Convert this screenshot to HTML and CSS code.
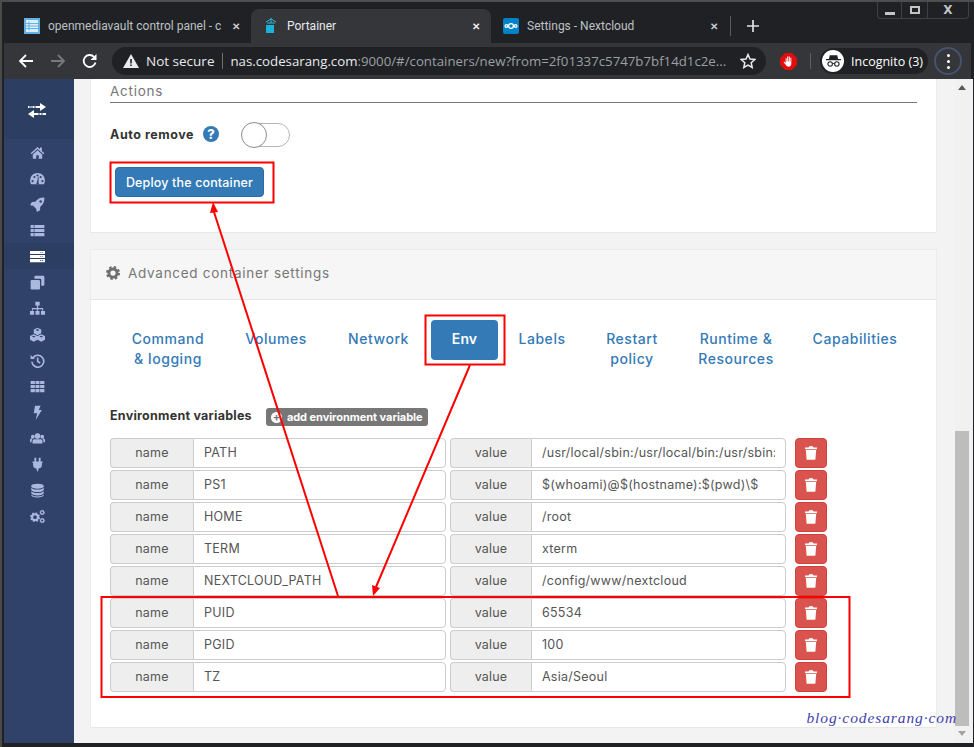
FILE: index.html
```html
<!DOCTYPE html>
<html lang="en">
<head>
<meta charset="utf-8">
<title>Portainer</title>
<link rel="stylesheet" href="styles.css">
</head>
<body>
<svg class="sprite" xmlns="http://www.w3.org/2000/svg">
  <symbol id="i-trash" viewBox="0 0 14 16"><path d="M5 0h4l1 1.500h4V3.500H0V1.500h4zM1 4.500h12l-.8 10.500a1 1 0 0 1-1 1H2.800a1 1 0 0 1-1-1z"/></symbol>
  <symbol id="i-gear" viewBox="0 0 24 24"><circle cx="12" cy="12" r="7" fill="none" stroke="currentColor" stroke-width="5"/><circle cx="12" cy="12" r="10" fill="none" stroke="currentColor" stroke-width="4" stroke-dasharray="4.200 3.650"/></symbol>
</svg>
<div class="window">
  <div class="tabstrip">
    <div class="tab">
      <svg class="favicon" viewBox="0 0 16 16"><rect width="16" height="16" fill="#63b1e5"/><rect x="2" y="2" width="12" height="12" fill="#dbeefa"/><path d="M5 3.500v9M2 5.500h12M2 8h12M2 10.500h12" stroke="#63b1e5"/></svg>
      <span class="tab-title">openmediavault control panel - c</span>
      <span class="tab-close">✕</span>
    </div>
    <div class="tab tab-active">
      <svg class="favicon" viewBox="0 0 16 16"><path d="M8 0v5M3 4l5-3 5 3M4 5h8" stroke="#2bb8d8" fill="none"/><rect x="3" y="7" width="8" height="8" fill="#19b5d8"/></svg>
      <span class="tab-title">Portainer</span>
      <span class="tab-close">✕</span>
    </div>
    <div class="tab tab-last">
      <svg class="favicon" viewBox="0 0 16 16"><rect width="16" height="16" rx="2" fill="#0082c9"/><g fill="none" stroke="#fff" stroke-width="1.300"><circle cx="8" cy="8" r="2.400"/><circle cx="3.400" cy="8" r="1.300"/><circle cx="12.600" cy="8" r="1.300"/></g></svg>
      <span class="tab-title">Settings - Nextcloud</span>
      <span class="tab-close">✕</span>
    </div>
    <span class="tab-sep"></span>
    <svg class="newtab" viewBox="0 0 12 12"><path d="M6 0v12M0 6h12" stroke="#dee1e6" stroke-width="1.700"/></svg>
    <div class="winctl">
      <span class="winbtn winbtn-min"><i></i></span>
      <span class="winbtn winbtn-max"><i></i></span>
      <span class="winbtn winbtn-close">X</span>
    </div>
  </div>
  <div class="toolbar">
    <svg class="navicon" viewBox="0 0 16 16"><path d="M15 8H2M8 2 2 8l6 6" fill="none" stroke="#fff" stroke-width="1.800"/></svg>
    <svg class="navicon navicon-off" viewBox="0 0 16 16"><path d="M1 8h13M8 2l6 6-6 6" fill="none" stroke="#77797c" stroke-width="1.800"/></svg>
    <svg class="navicon" viewBox="0 0 16 16"><path d="M13.500 9.500A6 6 0 1 1 12 3.800" fill="none" stroke="#fff" stroke-width="1.800"/><path d="M14.500 1v6h-6z" fill="#fff"/></svg>
    <div class="omnibox">
      <svg class="warn" viewBox="0 0 16 14"><path d="M8 0l8 14H0z" fill="#e8eaed"/><path d="M7.200 5h1.600v4.500H7.200zM7.200 10.500h1.600V12H7.200z" fill="#202124"/></svg>
      <span class="secure">Not secure</span>
      <span class="omni-sep"></span>
      <span class="url"><b>nas.codesarang.com</b>:9000/#/containers/new?from=2f01337c5747b7bf14d1c2e...</span>
      <svg class="star" viewBox="0 0 16 16"><path d="M8 1.500l2 4.500 4.800.5-3.600 3.200 1 4.800L8 12.100l-4.200 2.400 1-4.800L1.200 6.500 6 6z" fill="none" stroke="#e8eaed" stroke-width="1.500"/></svg>
    </div>
    <svg class="adblock" viewBox="0 0 18 18"><path d="M5.500 0h7L18 5.500v7L12.500 18h-7L0 12.500v-7z" fill="#e40d0d"/><path d="M6 5.500h1V9h.6V3.800h1.100V9h.6V3.800h1.100V9h.6V5h1V11c0 2-1 3.500-3 3.500-1.500 0-2.200-.8-3-2L3.700 9.500l.8-.6L6 10.500z" fill="#fff"/></svg>
    <span class="tool-sep"></span>
    <div class="incognito">
      <span class="incog-avatar"><svg viewBox="0 0 18 14"><path d="M4.500 0h9l1 4.500H18V6H0V4.500h3.500z" fill="#202124"/><g fill="none" stroke="#202124" stroke-width="1.300"><circle cx="5" cy="10.500" r="2.700"/><circle cx="13" cy="10.500" r="2.700"/></g><path d="M7.700 10h2.600" stroke="#202124"/></svg></span>
      <span class="incog-label">Incognito (3)</span>
    </div>
    <span class="menu-btn"><i></i><i></i><i></i></span>
  </div>
  <div class="viewport">
    <nav class="sidebar">
      <div class="brand">
        <svg viewBox="0 0 18 15"><path d="M0 3h12V0l6 4-6 4V5H0z" fill="#fff"/><path d="M18 10H6V7L0 11l6 4v-3h12z" fill="#fff"/><path d="M2 3v2M4 3v2M7 3v2M11 10v2M14 10v2" stroke="#30426a"/></svg>
      </div>
      <a class="side-item"><svg viewBox="0 0 24 24"><path d="M12 3 1 13l1.500 1.800L12 6.500l9.500 8.300L23 13l-4-3.600V4h-3v2.800zM4.500 15v7H10v-5.500h4V22h5.500v-7L12 8.500z"/></svg></a>
      <a class="side-item"><svg viewBox="0 0 24 24"><path fill-rule="evenodd" d="M12 3A12 12 0 0 0 0 15c0 2.500.7 4.500 2 6h20c1.300-1.500 2-3.500 2-6A12 12 0 0 0 12 3zM4 14.500a1.700 1.700 0 1 1 0 3.400 1.700 1.700 0 0 1 0-3.400zM7 8a1.700 1.700 0 1 1 0 3.400A1.700 1.700 0 0 1 7 8zm5-2.500a1.700 1.700 0 1 1 0 3.400 1.700 1.700 0 0 1 0-3.400zM17 8a1.700 1.700 0 1 1 0 3.400A1.700 1.700 0 0 1 17 8zm3 6.500a1.700 1.700 0 1 1 0 3.400 1.700 1.700 0 0 1 0-3.400zM11 18l2-8.500 1 .2-.5 8.300a2 2 0 1 1-2.500 0z"/></svg></a>
      <a class="side-item"><svg viewBox="0 0 24 24"><path fill-rule="evenodd" d="M23 1c.5 6-2 11-6.500 14.500L16 21l-5 3-1-5-5-5-5-1 3-5 5.500-.5C12 3 17 .5 23 1zM17 5a2 2 0 1 0 0 4 2 2 0 0 0 0-4z"/></svg></a>
      <a class="side-item"><svg viewBox="0 0 24 24"><path d="M1 3h5v5H1zM7 3h16v5H7zM1 9.500h5v5H1zM7 9.500h16v5H7zM1 16h5v5H1zM7 16h16v5H7z"/></svg></a>
      <a class="side-item side-active"><svg viewBox="0 0 24 24"><path fill-rule="evenodd" d="M0 3h24v5H0zM16 5v1h2V5zm3 0v1h2V5zM0 9.500h24v5H0zM16 11.500v1h2v-1zm3 0v1h2v-1zM0 16h24v5H0zM16 18v1h2v-1zm3 0v1h2v-1z"/></svg></a>
      <a class="side-item"><svg viewBox="0 0 24 24"><path d="M9 1h12a2 2 0 0 1 2 2v12a2 2 0 0 1-2 2h-3V8a2 2 0 0 0-2-2H7V3a2 2 0 0 1 2-2z"/><path d="M3 8h11a2 2 0 0 1 2 2v11a2 2 0 0 1-2 2H3a2 2 0 0 1-2-2V10a2 2 0 0 1 2-2z"/></svg></a>
      <a class="side-item"><svg viewBox="0 0 24 24"><path d="M8.500 1h7v6h-2.500v4h8v4.500h-1.500V13H13v2.500h-2V13H4.500v2.500H3V11h8V7H8.500zM0 16h6.500v6H0zM8.750 16h6.500v6h-6.500zM17.500 16H24v6h-6.500z"/></svg></a>
      <a class="side-item"><svg viewBox="0 0 24 24"><path fill-rule="evenodd" d="M12 1l6 3v6l-6 3-6-3V4zM12 3.300 9 4.800l3 1.500 3-1.500zM6 11.500l6 3v6l-6 3-6-3v-6zM6 13.800l-3 1.500 3 1.500 3-1.500zM18 11.500l6 3v6l-6 3-6-3v-6zM18 13.800l-3 1.500 3 1.500 3-1.500z"/></svg></a>
      <a class="side-item"><svg viewBox="0 0 24 24"><path d="M4.500 8A9.500 9.500 0 1 1 3 14" fill="none" stroke="currentColor" stroke-width="2.600"/><path d="M1 3l7 6.500H1zM11 7h2.500v5.500l3.500 2.500-1.500 2L11 14z"/></svg></a>
      <a class="side-item"><svg viewBox="0 0 24 24"><path d="M1 3h6.800v5H1zM8.800 3h6.400v5H8.800zM16.200 3H23v5h-6.800zM1 9.500h6.800v5H1zM8.800 9.500h6.400v5H8.800zM16.200 9.500H23v5h-6.800zM1 16h6.800v5H1zM8.800 16h6.400v5H8.800zM16.200 16H23v5h-6.800z"/></svg></a>
      <a class="side-item"><svg viewBox="0 0 24 24"><path d="M8 1h9l-3 7h5L9 24l2.500-11H6z"/></svg></a>
      <a class="side-item"><svg viewBox="0 0 24 24"><circle cx="12" cy="8" r="4.500"/><circle cx="4.500" cy="9" r="3"/><circle cx="19.500" cy="9" r="3"/><path d="M6.500 13h11c1.500 0 2.500 1.500 2.500 4v3H4v-3c0-2.500 1-4 2.500-4zM0 18v-3c0-2 1-3.500 3-3.500h2c-1.500 1-2.500 3-2.500 6.500zM24 18v-3c0-2-1-3.500-3-3.500h-2c1.500 1 2.500 3 2.500 6.500z"/></svg></a>
      <a class="side-item"><svg viewBox="0 0 24 24"><path d="M7 1h3v6h4V1h3v6h3v2.500h-1V13c0 3-2 5-5.500 5.500V20L12 24l-1.500-4v-1.500C7 18 5 16 5 13V9.500H4V7h3z"/></svg></a>
      <a class="side-item"><svg viewBox="0 0 24 24"><ellipse cx="12" cy="5" rx="10" ry="4"/><path d="M2 7.500c2 2 5.500 3 10 3s8-1 10-3V11c-2 2.500-5.500 3.500-10 3.500S4 13.500 2 11zM2 13c2 2 5.500 3 10 3s8-1 10-3v3.500c-2 2.500-5.500 3.500-10 3.500S4 19 2 16.500z"/><path d="M2 18.500c2 2 5.500 3 10 3s8-1 10-3V19c0 2.500-4.500 4-10 4S2 21.500 2 19z"/></svg></a>
      <a class="side-item"><svg viewBox="0 0 24 24"><use href="#i-gear" x="0" y="5" width="16" height="16"/><use href="#i-gear" x="15" y="1" width="9" height="9"/><use href="#i-gear" x="15" y="14" width="9" height="9"/></svg></a>
    </nav>
    <main class="main">
      <section class="card card-actions">
        <h2 class="section-title">Actions</h2>
        <div class="autoremove">
          <span class="field-label">Auto remove</span>
          <span class="help">?</span>
          <span class="toggle"><i></i></span>
        </div>
        <button class="btn-deploy" type="button">Deploy the container</button>
      </section>
      <section class="card card-advanced">
        <header class="card-head">
          <svg class="head-icon"><use href="#i-gear"/></svg>
          <span>Advanced container settings</span>
        </header>
        <div class="card-body">
          <ul class="pills">
            <li>Command<br>&amp; logging</li>
            <li>Volumes</li>
            <li>Network</li>
            <li class="pill-on">Env</li>
            <li>Labels</li>
            <li>Restart<br>policy</li>
            <li>Runtime &amp;<br>Resources</li>
            <li>Capabilities</li>
          </ul>
          <div class="env-head">
            <span class="field-label">Environment variables</span>
            <span class="badge"><span class="badge-plus">+</span>add environment variable</span>
          </div>
          <div class="env-row">
            <div class="pair"><span class="addon addon-name">name</span><input class="field" readonly value="PATH"></div>
            <div class="pair"><span class="addon addon-value">value</span><input class="field" readonly value="/usr/local/sbin:/usr/local/bin:/usr/sbin:/usr/bin:/sbin:/bin"></div>
            <button class="btn-del" type="button"><svg><use href="#i-trash"/></svg></button>
          </div>
          <div class="env-row">
            <div class="pair"><span class="addon addon-name">name</span><input class="field" readonly value="PS1"></div>
            <div class="pair"><span class="addon addon-value">value</span><input class="field" readonly value="$(whoami)@$(hostname):$(pwd)\$"></div>
            <button class="btn-del" type="button"><svg><use href="#i-trash"/></svg></button>
          </div>
          <div class="env-row">
            <div class="pair"><span class="addon addon-name">name</span><input class="field" readonly value="HOME"></div>
            <div class="pair"><span class="addon addon-value">value</span><input class="field" readonly value="/root"></div>
            <button class="btn-del" type="button"><svg><use href="#i-trash"/></svg></button>
          </div>
          <div class="env-row">
            <div class="pair"><span class="addon addon-name">name</span><input class="field" readonly value="TERM"></div>
            <div class="pair"><span class="addon addon-value">value</span><input class="field" readonly value="xterm"></div>
            <button class="btn-del" type="button"><svg><use href="#i-trash"/></svg></button>
          </div>
          <div class="env-row">
            <div class="pair"><span class="addon addon-name">name</span><input class="field" readonly value="NEXTCLOUD_PATH"></div>
            <div class="pair"><span class="addon addon-value">value</span><input class="field" readonly value="/config/www/nextcloud"></div>
            <button class="btn-del" type="button"><svg><use href="#i-trash"/></svg></button>
          </div>
          <div class="env-row">
            <div class="pair"><span class="addon addon-name">name</span><input class="field" readonly value="PUID"></div>
            <div class="pair"><span class="addon addon-value">value</span><input class="field" readonly value="65534"></div>
            <button class="btn-del" type="button"><svg><use href="#i-trash"/></svg></button>
          </div>
          <div class="env-row">
            <div class="pair"><span class="addon addon-name">name</span><input class="field" readonly value="PGID"></div>
            <div class="pair"><span class="addon addon-value">value</span><input class="field" readonly value="100"></div>
            <button class="btn-del" type="button"><svg><use href="#i-trash"/></svg></button>
          </div>
          <div class="env-row">
            <div class="pair"><span class="addon addon-name">name</span><input class="field" readonly value="TZ"></div>
            <div class="pair"><span class="addon addon-value">value</span><input class="field" readonly value="Asia/Seoul"></div>
            <button class="btn-del" type="button"><svg><use href="#i-trash"/></svg></button>
          </div>
        </div>
      </section>
    </main>
    <div class="scrollbar">
      <span class="scroll-up"></span>
      <span class="scroll-thumb"></span>
      <span class="scroll-down"></span>
    </div>
  </div>
  <svg class="annotations" viewBox="0 0 974 747">
    <g fill="none" stroke="#f00" stroke-width="2">
      <rect x="110.500" y="162.500" width="163" height="40"/>
      <rect x="425.500" y="315.500" width="79" height="49"/>
      <rect x="101.500" y="597" width="748" height="100"/>
      <path d="M338 596 214 212M470 365 376 587"/>
    </g>
    <path d="M213 202l5 10-8 1zM373 596l-1-11 8 3z" fill="#f00"/>
  </svg>
  <span class="watermark">blog·codesarang·com</span>
</div>
</body>
</html>
```
FILE: styles.css
```css
* { box-sizing: border-box; }
html, body { margin: 0; padding: 0; }
body { width: 974px; height: 747px; overflow: hidden; background: #202124; }
.sprite { display: none; }
.window {
  position: relative; width: 974px; height: 747px;
  display: flex; flex-direction: column;
  background: #202124;
  border-top: 2px solid #4d4d4d;
  border-left: 2px solid #4a4a4a;
  padding-left: 2px;
  padding-bottom: 4px;
  font-family: Inter, "Liberation Sans", sans-serif;
}

/* tab strip */
.tabstrip { height: 41px; flex: none; display: flex; align-items: flex-start; padding-left: 8px; font-family: Roboto, sans-serif; }
.tab { width: 239px; height: 34px; margin-top: 7px; display: flex; align-items: center; padding: 0 8px 0 12px; border-radius: 8px 8px 0 0; color: #bdc1c6; font-size: 12px; }
.tab-active { background: #35363a; color: #e8eaed; width: 240px; }
.tab-last { width: 238px; }
.favicon { width: 16px; height: 16px; flex: none; margin-right: 8px; }
.tab-title { flex: 1; min-width: 0; white-space: nowrap; }
.tab-close { font-size: 10px; width: 14px; font-weight: 700; color: #c8cbcf; text-align: center; }
.tab-active .tab-close { color: #e8eaed; }
.tab-sep { width: 1px; height: 20px; background: #5a5b5e; margin: 14px 0 0 1px; }
.newtab { width: 12px; height: 12px; margin: 18px 0 0 16px; flex: none; }
.winctl { margin-left: auto; margin-right: 5px; width: 92px; height: 17px; display: flex; border: 1px solid #3f4044; border-top: 0; border-radius: 0 0 4px 4px; color: #c4c4c4; }
.winbtn { display: flex; align-items: center; justify-content: center; border-right: 1px solid #3f4044; width: 24px; }
.winbtn-max { width: 26px; }
.winbtn-close { flex: 1; border-right: 0; width: auto; font: 700 12px "DejaVu Sans", sans-serif; }
.winbtn-min i { width: 10px; height: 3px; background: #c4c4c4; margin-top: 6px; }
.winbtn-max i { width: 10px; height: 8px; border: 2px solid #c4c4c4; }

/* toolbar */
.toolbar { height: 36px; flex: none; margin-right: 3px; display: flex; align-items: center; background: #35363a; padding-left: 14px; font-family: "Open Sans", sans-serif; }
.navicon { width: 16px; height: 16px; flex: none; margin-right: 16px; }
.omnibox { width: 654px; height: 28px; margin-left: -2px; border-radius: 14px; background: #202124; display: flex; align-items: center; padding-left: 11px; color: #e8eaed; font-size: 13.500px; }
.warn { width: 16px; height: 14px; flex: none; margin-right: 7px; }
.secure { white-space: nowrap; }
.omni-sep { width: 1px; height: 16px; background: #6b6d70; margin: 0 7px 0 8px; }
.url { color: #9aa0a6; white-space: nowrap; flex: 1; font-size: 13.250px; }
.url b { font-weight: 400; color: #e8eaed; }
.star { width: 16px; height: 16px; flex: none; margin: 0 10px 0 6px; }
.adblock { width: 17px; height: 17px; flex: none; margin-left: 14px; }
.tool-sep { width: 1px; height: 16px; background: #5f6063; margin: 0 9px 0 13px; }
.incognito { width: 108px; height: 26px; border-radius: 13px; background: #202124; display: flex; align-items: center; color: #fff; font-size: 12.500px; padding-left: 2px; }
.incog-avatar { width: 22px; height: 22px; border-radius: 50%; background: #fff; display: flex; align-items: center; justify-content: center; margin-right: 7px; }
.incog-avatar svg { width: 15px; height: 12px; }
.incog-label { white-space: nowrap; }
.menu-btn { width: 28px; height: 28px; margin-left: 6px; border-radius: 50%; border: 2px solid #46526e; display: flex; flex-direction: column; align-items: center; justify-content: center; gap: 3px; }
.menu-btn i { width: 3px; height: 3px; background: #fff; border-radius: 50%; }

/* viewport */
.viewport { flex: 1; display: flex; min-height: 0; margin-right: 1px; }
.sidebar { width: 70px; flex: none; background: #30426a; display: flex; flex-direction: column; padding-right: 4px; }
.brand { height: 60px; margin-right: -4px; padding: 2px 4px 0 0; background: #2d3e63; display: flex; align-items: center; justify-content: center; }
.brand svg { width: 18px; height: 15px; }
.side-item { height: 26px; display: flex; align-items: center; justify-content: center; color: #a9b8dd; }
.side-item svg { width: 15px; height: 15px; fill: currentColor; }
.side-active { background: #2d3e63; color: #fff; margin-right: -4px; padding-right: 4px; }
.main { width: 881px; flex: none; background: #f3f3f3; padding: 0 18px 0 16px; overflow: hidden; }
.card { background: #fff; border-bottom: 1px solid #e8e8e8; border-left: 1px solid #ececec; border-right: 1px solid #ececec; }
.card-actions { height: 154px; padding: 0 19px; }
.section-title { margin: 0; height: 24px; padding-top: 4px; font-size: 13.500px; line-height: 16px; font-weight: 400; color: #767676; border-bottom: 1px solid #777; letter-spacing: .75px; }
.autoremove { display: flex; align-items: center; height: 24px; margin-top: 20px; }
.autoremove .field-label { letter-spacing: .55px; position: relative; top: -1px; }
.field-label { font-size: 12.500px; font-weight: 700; color: #333; letter-spacing: .25px; white-space: nowrap; }
.help { width: 16px; height: 16px; margin: -2px 0 0 9px; border-radius: 50%; background: #337ab7; color: #fff; font-size: 13px; font-weight: 800; line-height: 16px; text-align: center; }
.toggle { position: relative; width: 48px; height: 24px; margin-left: 23px; border: 1px solid #b5b5b5; border-radius: 12px; background: #fff; }
.toggle i { position: absolute; left: -2px; top: -2px; width: 26px; height: 26px; border-radius: 50%; background: #fff; border: 1px solid #8c8c8c; }
.btn-deploy { display: block; width: 149px; height: 30px; margin: 20px 0 0 5px; border: 1px solid #2e6da4; border-radius: 4px; background: #337ab7; color: #fff; font: 500 12.500px Inter, sans-serif; letter-spacing: .15px; padding: 0; }
.card-advanced { height: 479px; margin-top: 16px; }
.card-head { height: 51px; display: flex; align-items: center; gap: 8px; padding: 0 0 3px 15px; background: #f6f6f6; border-top: 1px solid #ececec; border-bottom: 1px solid #e6e6e6; color: #767676; font-size: 13.500px; letter-spacing: .72px; }
.head-icon { width: 14px; height: 14px; fill: none; color: #6f6f6f; }
.card-body { padding: 20px 19px 0; }
.pills { list-style: none; margin: 0; padding: 0; display: grid; grid-template-columns: 116px 100px 105px 67px 88px 92px 116px 122px; gap: 0; align-items: start; color: #337ab7; font-size: 14px; line-height: 20px; text-align: center; height: 60px; letter-spacing: .55px; font-weight: 500; }
.pills li { padding: 9px 0 0; white-space: nowrap; }
.pills .pill-on { height: 40px; padding-top: 9px; background: #337ab7; color: #fff; border-radius: 4px; font-weight: 600; letter-spacing: .1px; }
.env-head { display: flex; align-items: center; height: 18px; margin-top: 28px; margin-bottom: 12px; }
.env-head .field-label { position: relative; top: -2px; }
.badge { margin-left: 14px; height: 18px; width: 162px; border-radius: 3px; background: #777; color: #fff; font-size: 11px; font-weight: 700; display: flex; align-items: center; padding-left: 5px; white-space: nowrap; letter-spacing: -.05px; }
.badge-plus { width: 11px; height: 11px; margin-right: 5px; border-radius: 50%; background: #fff; color: #777; font-size: 11px; line-height: 10px; text-align: center; flex: none; }
.env-row { display: flex; height: 30px; margin-bottom: 2px; }
.pair { width: 336px; display: flex; height: 30px; margin-right: 4px; }
.addon { flex: none; height: 30px; background: #eee; border: 1px solid #ccc; border-right: 0; border-radius: 4px 0 0 4px; color: #555; font-size: 12.500px; line-height: 27px; text-align: center; letter-spacing: .2px; }
.addon-name { width: 83px; }
.addon-value { width: 81px; }
.field { flex: 1; min-width: 0; height: 30px; border: 1px solid #ccc; border-radius: 0 4px 4px 0; padding: 0 10px 2px; color: #555; font: 12.500px Inter, sans-serif; letter-spacing: .25px; background: #fff; outline: 0; }
.btn-del { width: 32px; height: 30px; margin-left: 5px; border: 1px solid #d43f3a; border-radius: 4px; background: #d9534f; padding: 0; display: flex; align-items: center; justify-content: center; }
.btn-del svg { width: 12px; height: 14px; fill: #fff; }

/* scrollbar */
.scrollbar { flex: 1; background: #f1f1f1; display: flex; flex-direction: column; align-items: stretch; padding-right: 4px; }
.scroll-up { height: 16px; flex: none; position: relative; }
.scroll-up::after { content: ""; position: absolute; left: 3px; top: 6px; border: 4px solid transparent; border-top: 0; border-bottom: 5px solid #5a5a5a; }
.scroll-thumb { flex: none; margin-top: 336px; height: 295px; background: #bdbdbd; }
.scroll-down { flex: 1; position: relative; }
.scroll-down::after { content: ""; position: absolute; left: 3px; top: 5px; border: 4px solid transparent; border-bottom: 0; border-top: 5px solid #a3a3a3; }

/* overlays */
.annotations { position: absolute; left: -2px; top: -2px; width: 974px; height: 747px; pointer-events: none; }
.watermark { position: absolute; right: 17px; bottom: 20px; font: italic 15.500px "Liberation Serif", serif; letter-spacing: .9px; color: #3f3fae; white-space: nowrap; }
```
